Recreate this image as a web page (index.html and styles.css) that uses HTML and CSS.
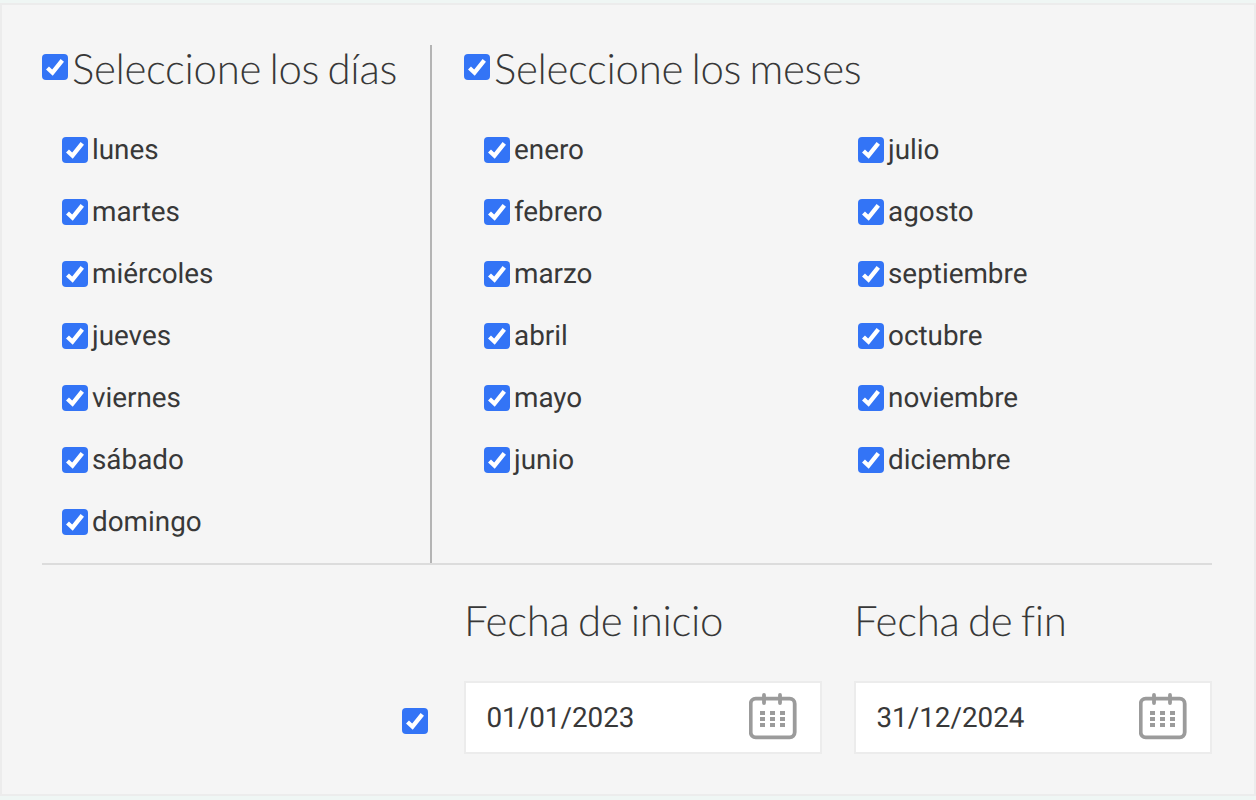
FILE: index.html
```html
<!DOCTYPE html>
<html lang="es">
<head>
<meta charset="utf-8">
<title>Selección</title>
<link rel="stylesheet" href="styles.css">
</head>
<body>
<svg class="defs" width="0" height="0">
  <symbol id="chk" viewBox="0 0 26 26"><rect width="26" height="26" rx="4" fill="#3374f6"/><path d="M5.500 14l5 4.700L20.300 6.300" fill="none" stroke="#fff" stroke-width="4.300"/></symbol>
  <symbol id="cal" viewBox="0 0 48 48">
    <rect x="1.700" y="6.700" width="44" height="38.600" rx="5" fill="none" stroke="#9b9b9b" stroke-width="3.800"/>
    <path d="M15 3v8M31 3v8" stroke="#9b9b9b" stroke-width="3.800" stroke-linecap="round"/>
    <path d="M11 19h5v4h-5zM21 19h5v4h-5zM31 19h5v4h-5zM11 25h5v4h-5zM21 25h5v4h-5zM31 25h5v4h-5zM11 31h5v4h-5zM21 31h5v4h-5zM31 31h5v4h-5z" fill="#9b9b9b"/>
  </symbol>
</svg>
<main class="panel">
  <div class="top">
    <section class="days">
      <h2 class="title"><svg class="box"><use href="#chk"/></svg>Seleccione los días</h2>
      <ul class="list">
        <li class="item"><svg class="box"><use href="#chk"/></svg>lunes</li>
        <li class="item"><svg class="box"><use href="#chk"/></svg>martes</li>
        <li class="item"><svg class="box"><use href="#chk"/></svg>miércoles</li>
        <li class="item"><svg class="box"><use href="#chk"/></svg>jueves</li>
        <li class="item"><svg class="box"><use href="#chk"/></svg>viernes</li>
        <li class="item"><svg class="box"><use href="#chk"/></svg>sábado</li>
        <li class="item"><svg class="box"><use href="#chk"/></svg>domingo</li>
      </ul>
    </section>
    <section class="months">
      <h2 class="title"><svg class="box"><use href="#chk"/></svg>Seleccione los meses</h2>
      <ul class="list month-grid">
        <li class="item"><svg class="box"><use href="#chk"/></svg>enero</li>
        <li class="item"><svg class="box"><use href="#chk"/></svg>julio</li>
        <li class="item"><svg class="box"><use href="#chk"/></svg>febrero</li>
        <li class="item"><svg class="box"><use href="#chk"/></svg>agosto</li>
        <li class="item"><svg class="box"><use href="#chk"/></svg>marzo</li>
        <li class="item"><svg class="box"><use href="#chk"/></svg>septiembre</li>
        <li class="item"><svg class="box"><use href="#chk"/></svg>abril</li>
        <li class="item"><svg class="box"><use href="#chk"/></svg>octubre</li>
        <li class="item"><svg class="box"><use href="#chk"/></svg>mayo</li>
        <li class="item"><svg class="box"><use href="#chk"/></svg>noviembre</li>
        <li class="item"><svg class="box"><use href="#chk"/></svg>junio</li>
        <li class="item"><svg class="box"><use href="#chk"/></svg>diciembre</li>
      </ul>
    </section>
  </div>
  <div class="bottom">
    <svg class="box range-check"><use href="#chk"/></svg>
    <div class="field">
      <div class="label">Fecha de inicio</div>
      <div class="input">01/01/2023<svg class="cal"><use href="#cal"/></svg></div>
    </div>
    <div class="field">
      <div class="label">Fecha de fin</div>
      <div class="input">31/12/2024<svg class="cal"><use href="#cal"/></svg></div>
    </div>
  </div>
</main>
</body>
</html>
```
FILE: styles.css
```css
* { box-sizing: border-box; }
html, body { margin: 0; padding: 0; }
body {
  width: 1256px;
  height: 800px;
  background: #eff6f4;
  padding: 3px 0 4px;
  overflow: hidden;
  font-family: Roboto, sans-serif;
  color: #383838;
  text-rendering: geometricPrecision;
}
.defs { display: block; height: 0; }
.panel {
  height: 793px;
  margin: 0;
  background: #f5f5f5;
  border: 2px solid #ececec;
  padding: 40px 42px 0 40px;
}
.top {
  display: flex;
  height: 520px;
  border-bottom: 2px solid #dcdcdc;
}
.days {
  width: 390px;
  border-right: 2px solid #b4b4b4;
}
.months { flex: 1; padding-left: 32px; }
.title {
  display: flex;
  align-items: center;
  margin: -2px 0 0;
  height: 50px;
  font: 300 42px/50px Lato, sans-serif;
  letter-spacing: -0.33px;
  word-spacing: -2.6px;
  color: #383838;
}
.title .box { margin-right: 4px; margin-top: -2px; }
.box { width: 26px; height: 26px; flex: none; display: block; }
.list {
  list-style: none;
  margin: 26px 0 0;
  padding: 0 0 0 20px;
}
.month-grid {
  display: grid;
  grid-template-columns: 374px 1fr;
}
.item {
  display: flex;
  align-items: center;
  height: 62px;
  font: 400 27.85px/62px Roboto, sans-serif;
  color: #383838;
}
.item .box { margin-right: 4px; }
.bottom {
  display: flex;
  align-items: flex-end;
  padding-left: 360px;
}
.range-check { margin-bottom: 20px; margin-right: 36px; }
.field { width: 358px; margin-right: 32px; }
.field:last-child { margin-right: 0; }
.label {
  font: 300 42px/50px Lato, sans-serif;
  letter-spacing: -0.33px;
  word-spacing: -2.6px;
  color: #383838;
  margin-top: 30px;
}
.input {
  display: flex;
  align-items: center;
  justify-content: space-between;
  height: 73px;
  margin-top: 36px;
  padding: 0 23px 0 20.500px;
  background: #fff;
  border: 2px solid #ececec;
  font: 400 27.8px/1 Roboto, sans-serif;
  color: #383838;
}
.cal { width: 48px; height: 48px; flex: none; margin-top: -4px; }
```
